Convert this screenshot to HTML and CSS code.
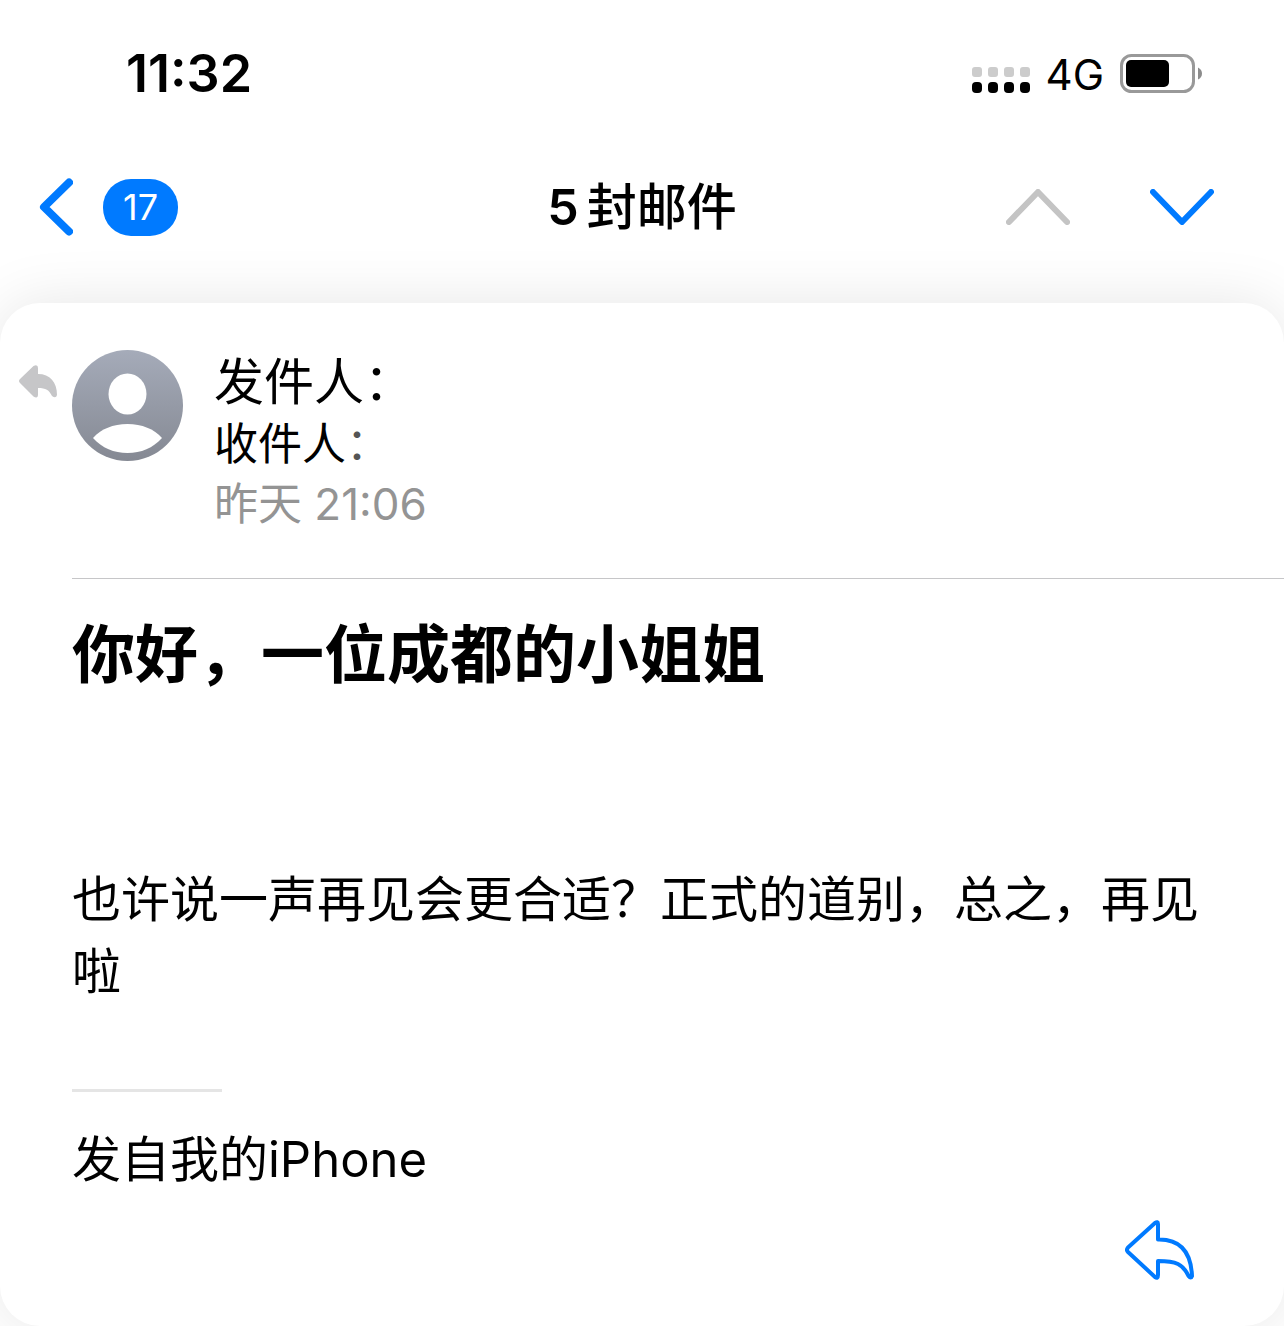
FILE: index.html
```html
<!DOCTYPE html>
<html lang="zh-CN">
<head>
    <meta charset="UTF-8">
    <meta name="viewport" content="width=device-width, initial-scale=1.0">
    <title>邮件</title>
    <link rel="stylesheet" href="styles.css">
</head>
<body>

    <!-- Status Bar -->
    <header class="status-bar">
        <time class="clock">11:32</time>
        <div class="status-icons">
            <svg class="signal" width="58" height="27" viewBox="0 0 58 27" aria-hidden="true">
                <g fill="#cccccc">
                    <rect x="0" y="0" width="10" height="10" rx="3"/>
                    <rect x="16" y="0" width="10" height="10" rx="3"/>
                    <rect x="32" y="0" width="10" height="10" rx="3"/>
                    <rect x="48" y="0" width="10" height="10" rx="3"/>
                </g>
                <g fill="#000000">
                    <rect x="0" y="15" width="10" height="11" rx="4"/>
                    <rect x="16" y="15" width="10" height="11" rx="4"/>
                    <rect x="32" y="15" width="10" height="11" rx="4"/>
                    <rect x="48" y="15" width="10" height="11" rx="4"/>
                </g>
            </svg>
            <span class="network">4G</span>
            <svg class="battery" width="82" height="39" viewBox="0 0 82 39" aria-hidden="true">
                <rect x="1.5" y="1.5" width="72" height="36" rx="10" fill="none" stroke="#999999" stroke-width="3"/>
                <rect x="6" y="6" width="43" height="27" rx="5" fill="#000000"/>
                <path d="M78 13.500Q82 15.500 82 19.500T78 25.500Z" fill="#8c8c8c"/>
            </svg>
        </div>
    </header>

    <!-- Navigation -->
    <nav class="nav-bar">
        <button type="button" class="back-button" aria-label="返回">
            <svg width="34" height="58" viewBox="0 0 34 58" aria-hidden="true">
                <path d="M30 4.500L5 29L30 53.500" fill="none" stroke="#007aff" stroke-width="8" stroke-linecap="round" stroke-linejoin="round"/>
            </svg>
            <span class="badge">17</span>
        </button>
        <h1 class="nav-title">5<span class="nav-unit">封邮件</span></h1>
        <div class="nav-arrows">
            <button type="button" aria-label="上一封" disabled>
                <svg width="64" height="36" viewBox="0 0 64 36" aria-hidden="true">
                    <path d="M3 33L32 3L61 33" fill="none" stroke="#c4c4c4" stroke-width="6" stroke-linecap="round" stroke-linejoin="round"/>
                </svg>
            </button>
            <button type="button" aria-label="下一封">
                <svg width="64" height="36" viewBox="0 0 64 36" aria-hidden="true">
                    <path d="M3 3L32 33L61 3" fill="none" stroke="#007aff" stroke-width="6" stroke-linecap="round" stroke-linejoin="round"/>
                </svg>
            </button>
        </div>
    </nav>

    <!-- Mail Card -->
    <main class="mail-card">
        <div class="mail-header">
            <svg class="replied" width="38" height="33" viewBox="0 0 38 33" aria-hidden="true">
                <path d="M1 14L14.500 1Q19 -1 19 3V9C31 9 38 17 38 30Q37 34 33 31C30 25 27 23 19 23V29.500Q19 34 14.500 31.500L1 18Q-1 16 1 14Z" fill="#c6c6c8"/>
            </svg>
            <svg class="avatar" width="111" height="111" viewBox="0 0 111 111" aria-hidden="true">
                <defs>
                    <linearGradient id="avatarFill" x1="0" y1="0" x2="0" y2="1">
                        <stop offset="0" stop-color="#a5abb9"/>
                        <stop offset="1" stop-color="#858993"/>
                    </linearGradient>
                </defs>
                <circle cx="55.500" cy="55.500" r="55.500" fill="url(#avatarFill)"/>
                <ellipse cx="55.500" cy="44" rx="19" ry="20.500" fill="#ffffff"/>
                <path d="M21 88C29 79 41 74 55.500 74S82 79 90 88C81 98 69 103 55.500 103S30 98 21 88Z" fill="#ffffff"/>
            </svg>
            <div class="mail-info">
                <p class="sender">发件人：</p>
                <p class="recipient">收件人<span class="faded">：</span></p>
                <p class="date">昨天 21:06</p>
            </div>
        </div>

        <article class="mail-content">
            <h2>你好，一位成都的小姐姐</h2>
            <p class="mail-text">也许说一声再见会更合适？正式的道别，总之，再见啦</p>
            <hr class="signature-line">
            <p class="signature">发自我的iPhone</p>
        </article>

        <div class="mail-actions">
            <button type="button" aria-label="回复">
                <svg width="70" height="60" viewBox="0 0 70 60" aria-hidden="true">
                    <path d="M3 27.500L30 3Q33 1 33 4V19.500C55 19 66 32 67 56Q66 59 63.500 56C58 44 51 41 33 41V55Q33 59 30 57L3 32Q1 30 3 27.500Z" fill="none" stroke="#007aff" stroke-width="4" stroke-linejoin="round"/>
                </svg>
            </button>
        </div>
    </main>

</body>
</html>
```

FILE: styles.css
```css
/* Global Styles */
* {
    margin: 0;
    padding: 0;
    box-sizing: border-box;
}

body {
    background: #ffffff;
    color: #000000;
    font-family: 'Inter', 'Noto Sans CJK SC', sans-serif;
    display: flex;
    flex-direction: column;
    min-height: 100vh;
    overflow-x: hidden;
}

button {
    display: flex;
    align-items: center;
    background: none;
    border: none;
    font-family: inherit;
    cursor: pointer;
}

svg {
    display: block;
    flex-shrink: 0;
}

/* STATUS BAR */
.status-bar {
    display: flex;
    justify-content: space-between;
    align-items: center;
    height: 146px;
    padding: 0 82px 0 126px;
}

.clock {
    font-size: 52px;
    font-weight: 600;
}

.status-icons {
    display: flex;
    align-items: center;
    gap: 16px;
}

.signal {
    margin-top: 14px;
}

.network {
    font-size: 42px;
    font-weight: 400;
    line-height: 48px;
    padding-top: 3px;
}

/* NAVIGATION */
.nav-bar {
    display: grid;
    grid-template-columns: 1fr auto 1fr;
    align-items: center;
    height: 122px;
    margin-bottom: 35px;
}

.back-button {
    justify-self: start;
    gap: 30px;
    margin-left: 39px;
}

.badge {
    background: #007aff;
    color: #ffffff;
    border-radius: 28px;
    width: 75px;
    font-size: 36px;
    line-height: 57px;
    text-align: center;
}

.nav-title {
    font-size: 50px;
    font-weight: 600;
    line-height: 60px;
}

.nav-unit {
    font-weight: 500;
    margin-left: 8px;
}

.nav-arrows {
    display: flex;
    justify-self: end;
    gap: 80px;
    margin-right: 70px;
}

/* MAIL CARD */
.mail-card {
    flex: 1;
    display: flex;
    flex-direction: column;
    background: #ffffff;
    border-radius: 40px;
    box-shadow: 0 0 60px rgba(0, 0, 0, 0.1);
}

.mail-header {
    display: flex;
    align-items: flex-start;
    padding: 47px 0 0 19px;
}

.replied {
    margin-top: 15px;
}

.avatar {
    margin-left: 15px;
}

.mail-info {
    margin-left: 31px;
}

.sender {
    font-size: 50px;
    line-height: 64px;
}

.recipient {
    font-size: 44px;
    line-height: 60px;
}

.faded {
    color: #555555;
}

.date {
    color: #949494;
    font-size: 44px;
    line-height: 60px;
}

/* MAIL CONTENT */
.mail-content {
    border-top: 1px solid #c6c6c8;
    margin: 44px 0 0 72px;
    padding: 37px 72px 0 0;
}

.mail-content h2 {
    font-size: 63px;
    font-weight: 700;
    line-height: 76px;
    margin-bottom: 172px;
}

.mail-text {
    font-size: 49px;
    line-height: 72px;
}

.signature-line {
    width: 150px;
    height: 3px;
    border: none;
    background: #e5e5e5;
    margin: 81px 0 32px;
}

.signature {
    font-size: 49px;
    line-height: 72px;
}

.mail-actions {
    display: flex;
    justify-content: flex-end;
    margin-top: auto;
    padding: 0 89px 46px 0;
}
```
